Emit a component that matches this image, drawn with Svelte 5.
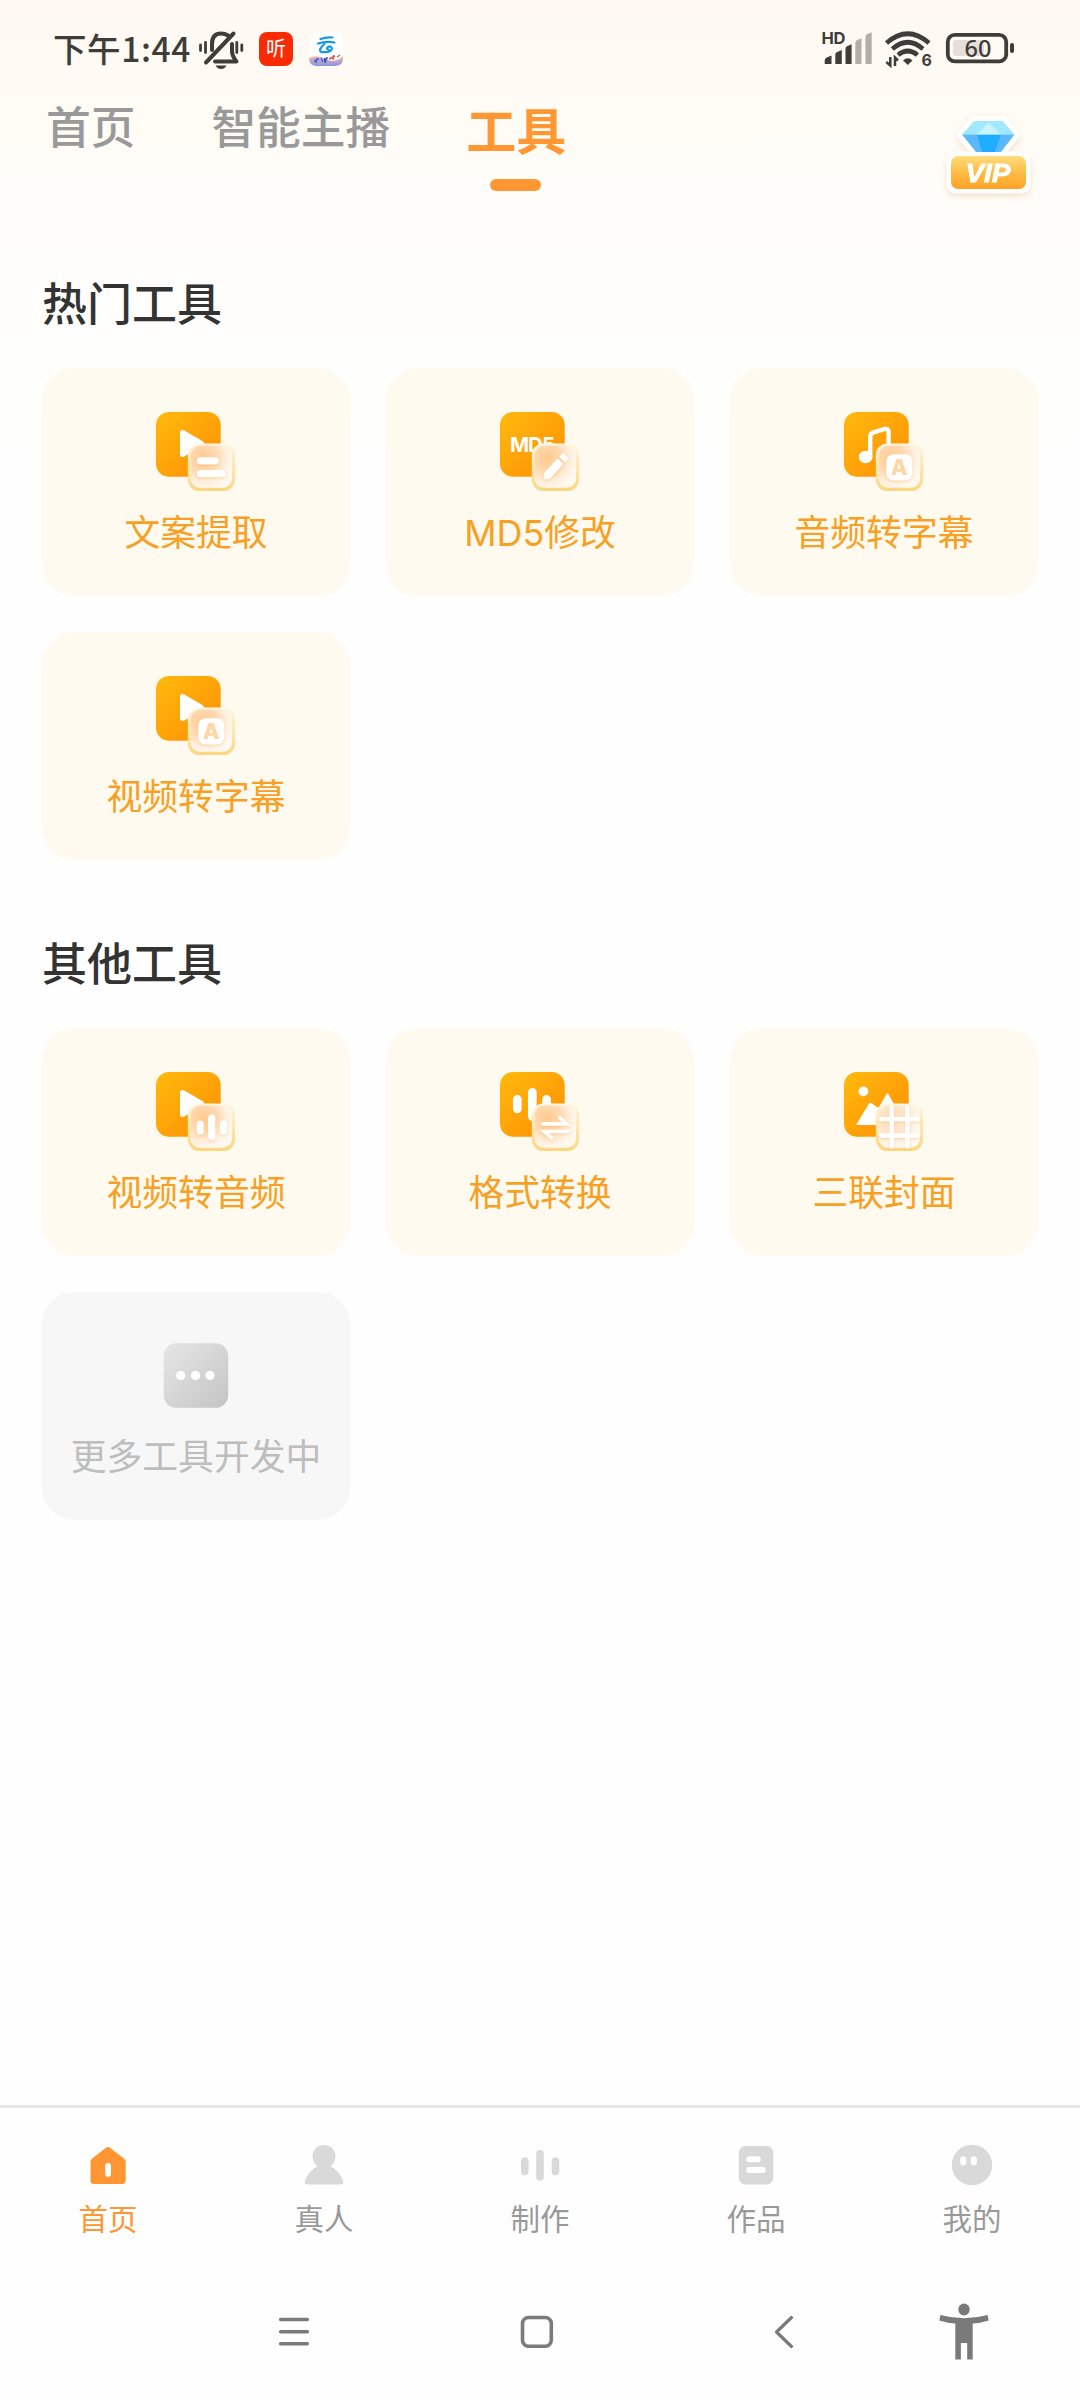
<script>
  const tabs = ['首页', '智能主播', '工具'];
  let activeTab = $state('工具');
  let activeNav = $state('首页');

  const sections = [
    {
      title: '热门工具',
      tools: [
        { name: '文案提取', base: 'play', badge: 'lines' },
        { name: 'MD5修改', base: 'md5', badge: 'pencil' },
        { name: '音频转字幕', base: 'music', badge: 'letter' },
        { name: '视频转字幕', base: 'play', badge: 'letter' }
      ]
    },
    {
      title: '其他工具',
      tools: [
        { name: '视频转音频', base: 'play', badge: 'bars' },
        { name: '格式转换', base: 'wave', badge: 'swap' },
        { name: '三联封面', base: 'image', badge: 'grid' },
        { name: '更多工具开发中', base: 'more', badge: '' }
      ]
    }
  ];

  const navs = [
    { name: '首页', icon: 'home' },
    { name: '真人', icon: 'person' },
    { name: '制作', icon: 'make' },
    { name: '作品', icon: 'works' },
    { name: '我的', icon: 'mine' }
  ];
</script>

{#snippet toolIcon(base, badge)}
  <svg class="tool-icon" viewBox="0 0 80 80">
    {#if base === 'more'}
      <rect x="7.7" y="7.3" width="64.5" height="64.5" rx="12.5" fill="url(#gray)" />
      <circle cx="24.7" cy="39.4" r="4.6" fill="#fff" />
      <circle cx="39.5" cy="39.4" r="4.6" fill="#fff" />
      <circle cx="54" cy="39.4" r="4.6" fill="#fff" />
    {:else}
      <rect width="64.7" height="64.7" rx="13" fill="url(#orange)" />
      {#if base === 'play'}
        <path d="M26.5 20.5v22L45.5 31.5z" fill="#fff" stroke="#fff" stroke-width="5" stroke-linejoin="round" />
      {:else if base === 'md5'}
        <text class="md5" x="10" y="39.5" textLength="45">MD5</text>
      {:else if base === 'music'}
        <ellipse cx="21.6" cy="45" rx="6.8" ry="6.2" fill="#fff" />
        <path d="M26.2 45V25Q26.2 21.5 29.5 20.4L41 17Q44.6 16.2 44.6 20V40" fill="none" stroke="#fff" stroke-width="4.4" />
      {:else if base === 'wave'}
        <path d="M17.3 27.3v9.5M32.3 20.3v24M46.6 27.3v9.5" stroke="#fff" stroke-width="8.7" stroke-linecap="round" />
      {:else if base === 'image'}
        <circle cx="19.4" cy="19.4" r="4.9" fill="#fff" />
        <path d="M12 53 25 31.4q1-1.2 2.2-.3l7.3 4.8 8-14q.9-1.4 1.8 0L60 50v3z" fill="#fff" />
      {/if}
      <rect x="31.8" y="31.5" width="47.2" height="47.5" rx="11.5" fill="url(#rim)" />
      <rect x="34.6" y="33.6" width="41.6" height="42.2" rx="9.5" fill="#fff9f1" />
      <rect x="34.6" y="33.6" width="41.6" height="42.2" rx="9.5" fill="url(#peach)" opacity={badge === 'grid' ? 0.6 : 1} />
      <g class="mark">
        {#if badge === 'lines'}
          <path d="M44.4 48.8H59.4M44.4 61.7H66.6" stroke-width="7.2" stroke-linecap="round" />
        {:else if badge === 'pencil'}
          <path class="solid" d="M43.8 67.2v-6L57.6 46.4l5.8 5.6L49.6 67.2zM59.2 44.8l3-3.1q1-.8 2 0l3.8 3.7q1 1 0 2l-3 3.1z" />
        {:else if badge === 'letter'}
          <rect class="solid" x="42.2" y="42.2" width="26.2" height="26.4" rx="7" />
        {:else if badge === 'bars'}
          <path d="M44.2 52v7.2M55.7 46v18.6M67.5 52v7.2" stroke-width="7.2" stroke-linecap="round" />
        {:else if badge === 'swap'}
          <path d="M43 51.9H66.5L59.7 45.7M68 59.5H44.4L51.6 65.8" stroke-width="3.6" stroke-linecap="round" />
        {:else if badge === 'grid'}
          <path d="M47.7 35.5v39M63.4 35.5v39M37 47.3h37M37 63.6h37" stroke-width="4.6" stroke-linecap="round" />
        {/if}
      </g>
      {#if badge === 'letter'}
        <text class="letter" x="55.3" y="63.2">A</text>
      {/if}
    {/if}
  </svg>
{/snippet}

<svg class="defs" width="0" height="0">
  <defs>
    <linearGradient id="orange" x1="0" y1="0" x2="1" y2="1">
      <stop offset="0" stop-color="#ffba0c" />
      <stop offset="1" stop-color="#ff8d05" />
    </linearGradient>
    <linearGradient id="gray" x1="0" y1="0" x2="1" y2="1">
      <stop offset="0" stop-color="#e6e6e6" />
      <stop offset="1" stop-color="#c4c4c4" />
    </linearGradient>
    <linearGradient id="rim" x1="0" y1="0" x2="0" y2="1">
      <stop offset="0" stop-color="#fff8ea" />
      <stop offset="0.35" stop-color="#ffe9b4" />
      <stop offset="1" stop-color="#fbd780" />
    </linearGradient>
    <radialGradient id="peach" cx="0.3" cy="0.3" r="0.8">
      <stop offset="0" stop-color="#ffca8e" />
      <stop offset="0.45" stop-color="#ffd7ac" stop-opacity="0.9" />
      <stop offset="1" stop-color="#fff0e0" stop-opacity="0" />
    </radialGradient>
    <linearGradient id="gold" x1="0" y1="0" x2="0" y2="1">
      <stop offset="0" stop-color="#ffdc7c" />
      <stop offset="0.5" stop-color="#ffbd45" />
      <stop offset="1" stop-color="#ffa126" />
    </linearGradient>
    <linearGradient id="cloud" x1="0" y1="0" x2="0" y2="1">
      <stop offset="0" stop-color="#f6b9b0" />
      <stop offset="1" stop-color="#8a93e0" />
    </linearGradient>
  </defs>
</svg>

<div class="page">
  <div class="status">
    <span class="time">下午1:44</span>
    <svg class="mute" width="48" height="42" viewBox="0 -1 48 42" fill="none" stroke="#3f3d3a" stroke-width="4" stroke-linecap="round">
      <path d="M16 21V15Q16 4.5 25 4.5Q29 4.5 32 6.5" />
      <path d="M36 15V22Q36 27 40.5 32.5H19" stroke-linejoin="round" />
      <path d="M10 33.5 37.5 4.5" />
      <path d="M4.5 16v5.5M9.5 13.5v10M40.8 13.5v10M45.8 16v5.5" stroke-width="2.8" />
      <path d="M19.5 36.5h11q-2 3.5-5.5 3.5t-5.5-3.5z" fill="#3f3d3a" stroke="none" />
    </svg>
    <span class="ting">听</span>
    <svg class="cloud" width="34" height="34" viewBox="0 0 34 34">
      <rect width="34" height="34" rx="8" fill="#fff" />
      <path d="M0 26Q8 22 17 27T34 24V26Q34 34 26 34H8Q0 34 0 26z" fill="url(#cloud)" />
      <path d="M11.5 7Q17 5 23.5 5.5M9 11.5Q17 9 25.5 10.5M15.5 12Q9 17.5 12 20Q22 21 23 16.5Q22 13 18.5 15.3q-1.5 2 1 2.2" fill="none" stroke="#1597ea" stroke-width="2.2" stroke-linecap="round" />
      <path d="M5 29l5-2M8 26l-1 5M12 26l2 4M15 27l3-1-2 5" stroke="#3a6bd8" stroke-width="1.6" />
      <path d="M20 27l6-3M25 23l-1 5M28 25l3-2" stroke="#e0504f" stroke-width="1.4" />
    </svg>

    <svg class="system" width="196" height="40" viewBox="820 30 196 40">
      <text class="hd" x="821.5" y="45" textLength="24">HD</text>
      <path d="M824.7 65v-3.5q0-2 2-3l4.8-2V65zM835.3 65V55.5q0-1.5 1.5-2.2l5-2.3V65zM845.5 65V49.5q0-1.5 1.5-2.2l4.6-2V65z" fill="#3f3d3a" />
      <path d="M855.3 65V44q0-2 1.5-2.7l4.7-2V65zM865.5 65V38q0-2 1.5-2.7l4.7-2V65z" fill="#b3aea8" />
      <g fill="none" stroke="#3f3d3a" stroke-width="4.6">
        <path d="M886.5 44Q907.8 25.5 929 44" />
        <path d="M892.3 50Q907.8 36.5 923 50" />
        <path d="M898 56Q907.8 48 917.5 56" />
      </g>
      <path d="M903 61.5q4.8-4.5 9.5 0L907.8 66z" fill="#3f3d3a" />
      <path d="M890.3 58v8.5l-4-3.5M895 67v-8.5l3 3" fill="none" stroke="#3f3d3a" stroke-width="2.5" />
      <text class="six" x="921.6" y="66.5">6</text>
      <rect x="953" y="41" width="31" height="16" rx="3" fill="#e6dfd9" />
      <rect x="947.8" y="35.8" width="58.4" height="26.6" rx="7" fill="none" stroke="#3f3d3a" stroke-width="3.8" />
      <rect x="1010" y="44" width="4" height="10" rx="2" fill="#3f3d3a" />
      <text class="level" x="978" y="57.7">60</text>
    </svg>
  </div>

  <header class="top">
    <div class="tabs">
      {#each tabs as tab}
        <button class="tab" class:active={tab === activeTab} onclick={() => (activeTab = tab)}>{tab}</button>
      {/each}
    </div>
    <svg class="vip" width="90" height="86" viewBox="944 112 90 86">
      <g fill="#fff" stroke="#fff" stroke-width="10" stroke-linejoin="round">
        <path d="M974.5 121H1002.5L1014.5 135 1001 152H976L962 135z" />
        <rect x="952" y="157" width="73" height="31" rx="4" stroke-width="11" />
      </g>
      <path d="M974.5 121H1002.5L1014.5 134.5H962z" fill="#9fe8ff" />
      <path d="M962 134.5H1014.5L1001 152H976z" fill="#5bb8fb" />
      <path d="M977 134.5H1001L995 152H982z" fill="#20adff" />
      <path d="M988.5 122.5 1001 134.5H977z" fill="#c9f4ff" />
      <rect x="951" y="156" width="75" height="33" rx="7" fill="url(#gold)" />
      <text class="vip-text" x="965.5" y="182" textLength="45" lengthAdjust="spacingAndGlyphs">VIP</text>
    </svg>
  </header>

  <main>
    {#each sections as section}
      <section>
        <h2>{section.title}</h2>
        <div class="grid">
          {#each section.tools as tool}
            <div class="card" class:disabled={tool.base === 'more'}>
              {@render toolIcon(tool.base, tool.badge)}
              <span>{tool.name}</span>
            </div>
          {/each}
        </div>
      </section>
    {/each}
  </main>

  <nav class="tabbar">
    {#each navs as nav}
      <button class="nav-item" class:active={nav.name === activeNav} onclick={() => (activeNav = nav.name)}>
        <svg width="44" height="44" viewBox="0 0 44 44" fill="currentColor">
          {#if nav.icon === 'home'}
            <path d="M20 4.7q2-1.4 4 0L38 15.5q1.7 1.3 1.7 3.3V37.500q0 3.5-3.5 3.5H8q-3.5 0-3.500-3.500V18.800q0-2 1.700-3.300z" />
            <rect x="19.2" y="20" width="5.8" height="14" rx="2.9" fill="#fff" />
          {:else if nav.icon === 'person'}
            <circle cx="22" cy="13.5" r="11.5" />
            <path d="M16 23q6-3 12 0 9 4 13.3 15 .6 3.5-3 3.5H5.7q-3.6 0-3-3.5Q7 27 16 23z" />
          {:else if nav.icon === 'make'}
            <path d="M6.8 18v10.5M22 10.7v23.2M37.5 18v10.5" stroke="currentColor" stroke-width="7.6" stroke-linecap="round" />
          {:else if nav.icon === 'works'}
            <rect x="4.8" y="3" width="34.5" height="38.5" rx="6.5" />
            <path d="M15.2 16.2h8.5M15.2 27h13.5" stroke="#fff" stroke-width="6" stroke-linecap="round" />
          {:else}
            <circle cx="22" cy="22" r="20.2" />
            <rect x="10.2" y="13.2" width="6" height="9.4" rx="3" fill="#fff" />
            <rect x="20.8" y="13.2" width="6" height="9.4" rx="3" fill="#fff" />
          {/if}
        </svg>
        <span>{nav.name}</span>
      </button>
    {/each}
  </nav>

  <div class="system-nav">
    <svg width="36" height="36" viewBox="0 0 36 36"><path d="M4.7 5.5h26.6M4.7 17.7h26.6M4.7 29.7h26.6" /></svg>
    <svg width="36" height="36" viewBox="0 0 36 36"><rect x="3.5" y="3.5" width="28.8" height="28.8" rx="6" /></svg>
    <svg width="36" height="36" viewBox="0 0 36 36"><path d="M25.5 3.5 10.5 18l15 14.5" stroke-width="3.2" /></svg>
    <svg width="52" height="58" viewBox="0 0 52 58">
      <g fill="#7a7a7a" stroke="none">
        <ellipse cx="26" cy="6.5" rx="5.7" ry="6" />
        <path d="M2.5 12Q26 18.5 49.5 12l1.2 5.5Q43 20 34.7 20.5V56.5h-5.5V40h-6.3V56.5h-5.6V20.5Q9 20 1.3 17.5z" />
      </g>
    </svg>
  </div>
</div>

<style>
  :global(body) { background: #fefefe; }
  .defs { position: absolute; }
  .page {
    width: 1080px;
    height: 2400px;
    display: flex;
    flex-direction: column;
    overflow: hidden;
    font-family: "Noto Sans CJK SC", sans-serif;
    background: linear-gradient(#fff8f2 0, #fffbf4 90px, #fffdf9 190px, #fefefd 370px, #fefefe 500px);
  }
  button { border: 0; padding: 0; background: none; font-family: inherit; }

  .status { display: flex; align-items: center; height: 98px; padding: 0 64px 0 53px; box-sizing: border-box; }
  .time { width: 143px; padding-bottom: 3px; font-size: 33.5px; font-weight: 500; letter-spacing: 0.6px; color: #3f3d3a; white-space: nowrap; }
  .mute { margin-right: 15px; }
  .ting { width: 34px; height: 34px; border-radius: 8px; background: #f92b05; color: #fff; font-size: 20px; line-height: 32px; text-align: center; margin-right: 16px; }
  .system { margin-left: auto; }
  .hd { font: 700 16.5px Inter, sans-serif; fill: #3f3d3a; }
  .six { font: 700 16px Inter, sans-serif; fill: #3f3d3a; }
  .level { font: 500 23.5px "Noto Sans", sans-serif; fill: #3f3d3a; text-anchor: middle; }

  .top { display: flex; justify-content: space-between; height: 162px; padding: 0 46px; }
  .tabs { display: flex; align-items: flex-start; gap: 76px; }
  .tab { display: flex; flex-direction: column; align-items: center; font-size: 44.7px; line-height: 54px; font-weight: 500; color: #999; }
  .tab.active { font-size: 50px; line-height: 60px; font-weight: 700; color: #ff9833; }
  .tab.active::after { content: ''; width: 51px; height: 12px; margin: 21px 2px 0 0; border-radius: 6px; background: #ff9833; }
  .vip { margin-top: 14px; filter: drop-shadow(0 3px 3px rgba(200, 130, 60, 0.22)); }
  .vip-text { font: italic 700 26px "Liberation Sans", sans-serif; fill: #fff; stroke: #fff; stroke-width: 0.8; }

  main { flex: 1; padding: 0 42px; }
  section { height: 660px; }
  h2 { margin: 0; height: 108px; font-size: 45px; line-height: 83px; font-weight: 500; color: #333; }
  .grid { display: grid; grid-template-columns: repeat(3, 308px); gap: 36px; }
  .card { display: flex; flex-direction: column; align-items: center; height: 228px; padding-top: 44px; box-sizing: border-box; border-radius: 32px; background: #fffaef; color: #f7a024; font-family: Inter, "Noto Sans CJK SC", sans-serif; font-size: 35.8px; line-height: 52px; }
  .card span { margin-top: 15px; }
  .card.disabled { background: #f7f7f7; color: #bdbdbd; }
  .tool-icon { width: 80px; height: 80px; flex: none; }
  .md5 { font: 700 20.5px Inter, sans-serif; fill: #fff; }
  .mark { fill: none; stroke: #fff; filter: drop-shadow(0 1px 1px rgba(255, 165, 60, 0.4)); }
  .solid { fill: #fff; stroke: none; }
  .letter { font: 800 21.5px Inter, sans-serif; fill: #ffd5a4; text-anchor: middle; }

  .tabbar { display: grid; grid-template-columns: repeat(5, 1fr); height: 172px; border-top: 3px solid #e6e6e6; box-sizing: border-box; background: #fefefe; }
  .nav-item { display: flex; flex-direction: column; align-items: center; justify-content: flex-start; padding-top: 35px; color: #d9d9d9; }
  .nav-item span { margin-top: 8px; font-size: 29.5px; line-height: 44px; color: #999; }
  .nav-item.active, .nav-item.active span { color: #ff9633; }

  .system-nav { display: flex; align-items: center; height: 123px; padding: 0 90px 14px 276px; box-sizing: border-box; background: #fefefe; }
  .system-nav svg { fill: none; stroke: #7a7a7a; stroke-width: 3.6; stroke-linecap: round; stroke-linejoin: round; }
  .system-nav svg:nth-child(2) { margin-left: 207px; }
  .system-nav svg:nth-child(3) { margin-left: 211px; }
  .system-nav svg:nth-child(4) { margin-left: auto; }
</style>
